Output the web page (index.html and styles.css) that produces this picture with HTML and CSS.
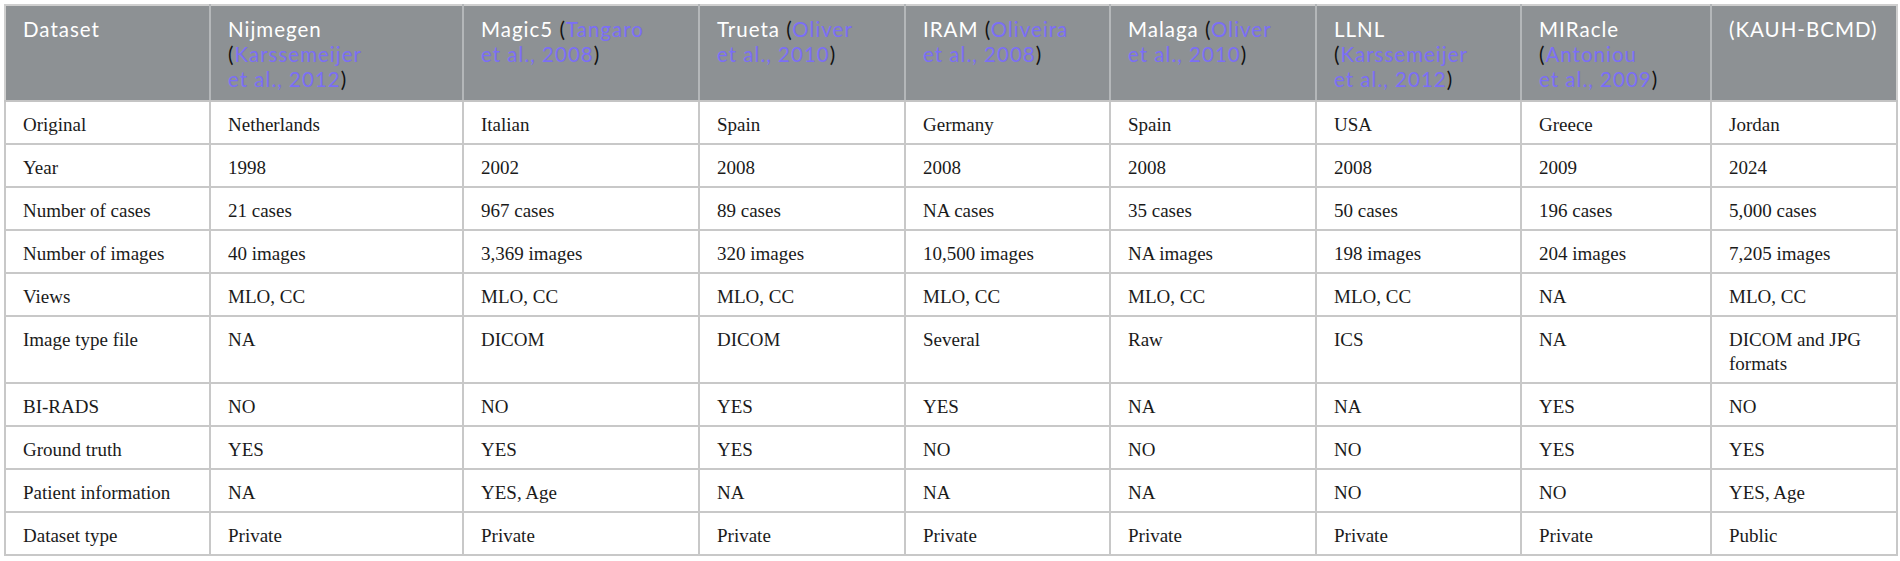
FILE: index.html
```html
<!DOCTYPE html>
<html lang="en">
<head>
<meta charset="utf-8">
<title>Dataset comparison</title>
<link rel="stylesheet" href="styles.css">
</head>
<body>
<div class="wrap">
<table class="data">
  <colgroup>
    <col class="c1"><col class="c2"><col class="c3"><col class="c4"><col class="c5"><col class="c6"><col class="c7"><col class="c8"><col class="c9">
  </colgroup>
  <thead>
    <tr>
      <th><span class="ln">Dataset</span></th>
      <th><span class="ln">Nijmegen</span><span class="ln"><span class="p">(</span><a class="ref">Karssemeijer</a></span><span class="ln"><a class="ref">et al., 2012</a><span class="p">)</span></span></th>
      <th><span class="ln">Magic5 <span class="p">(</span><a class="ref">Tangaro</a></span><span class="ln"><a class="ref">et al., 2008</a><span class="p">)</span></span></th>
      <th><span class="ln">Trueta <span class="p">(</span><a class="ref">Oliver</a></span><span class="ln"><a class="ref">et al., 2010</a><span class="p">)</span></span></th>
      <th><span class="ln">IRAM <span class="p">(</span><a class="ref">Oliveira</a></span><span class="ln"><a class="ref">et al., 2008</a><span class="p">)</span></span></th>
      <th><span class="ln">Malaga <span class="p">(</span><a class="ref">Oliver</a></span><span class="ln"><a class="ref">et al., 2010</a><span class="p">)</span></span></th>
      <th><span class="ln">LLNL</span><span class="ln"><span class="p">(</span><a class="ref">Karssemeijer</a></span><span class="ln"><a class="ref">et al., 2012</a><span class="p">)</span></span></th>
      <th><span class="ln">MIRacle</span><span class="ln"><span class="p">(</span><a class="ref">Antoniou</a></span><span class="ln"><a class="ref">et al., 2009</a><span class="p">)</span></span></th>
      <th><span class="ln">(KAUH-BCMD)</span></th>
    </tr>
  </thead>
  <tbody>
    <tr><td>Original</td><td>Netherlands</td><td>Italian</td><td>Spain</td><td>Germany</td><td>Spain</td><td>USA</td><td>Greece</td><td>Jordan</td></tr>
    <tr><td>Year</td><td>1998</td><td>2002</td><td>2008</td><td>2008</td><td>2008</td><td>2008</td><td>2009</td><td>2024</td></tr>
    <tr><td>Number of cases</td><td>21 cases</td><td>967 cases</td><td>89 cases</td><td>NA cases</td><td>35 cases</td><td>50 cases</td><td>196 cases</td><td>5,000 cases</td></tr>
    <tr><td>Number of images</td><td>40 images</td><td>3,369 images</td><td>320 images</td><td>10,500 images</td><td>NA images</td><td>198 images</td><td>204 images</td><td>7,205 images</td></tr>
    <tr><td>Views</td><td>MLO, CC</td><td>MLO, CC</td><td>MLO, CC</td><td>MLO, CC</td><td>MLO, CC</td><td>MLO, CC</td><td>NA</td><td>MLO, CC</td></tr>
    <tr><td>Image type file</td><td>NA</td><td>DICOM</td><td>DICOM</td><td>Several</td><td>Raw</td><td>ICS</td><td>NA</td><td>DICOM and JPG formats</td></tr>
    <tr><td>BI-RADS</td><td>NO</td><td>NO</td><td>YES</td><td>YES</td><td>NA</td><td>NA</td><td>YES</td><td>NO</td></tr>
    <tr><td>Ground truth</td><td>YES</td><td>YES</td><td>YES</td><td>NO</td><td>NO</td><td>NO</td><td>YES</td><td>YES</td></tr>
    <tr><td>Patient information</td><td>NA</td><td>YES, Age</td><td>NA</td><td>NA</td><td>NA</td><td>NO</td><td>NO</td><td>YES, Age</td></tr>
    <tr><td>Dataset type</td><td>Private</td><td>Private</td><td>Private</td><td>Private</td><td>Private</td><td>Private</td><td>Private</td><td>Public</td></tr>
  </tbody>
</table>
</div>
</body>
</html>
```

FILE: styles.css
```css
html, body {
  margin: 0;
  padding: 0;
  background: #ffffff;
}

.wrap {
  padding: 4px;
}

.data {
  width: 1892px;
  border-collapse: collapse;
  table-layout: fixed;
  border: 2px solid #cfcfcf;
}

.c1 { width: 205px; }
.c2 { width: 253px; }
.c3 { width: 236px; }
.c4 { width: 206px; }
.c5 { width: 205px; }
.c6 { width: 206px; }
.c7 { width: 205px; }
.c8 { width: 190px; }
.c9 { width: 186px; }

.data th {
  background: #8d9194;
  color: #ffffff;
  font-family: Lato, "Open Sans", sans-serif;
  font-weight: 400;
  font-size: 20.5px;
  line-height: 25px;
  letter-spacing: 1px;
  text-align: left;
  vertical-align: top;
  padding: 11px 6px 8px 17px;
  border: 2px solid #b4b7b9;
  border-top-color: #cfcfcf;
  border-bottom-color: #c4c4c4;
}

.data th:first-child { border-left-color: #cfcfcf; }
.data th:last-child { border-right-color: #cfcfcf; }

.ln {
  display: block;
  height: 25px;
  white-space: nowrap;
}

.p {
  color: #111111;
}

.ref {
  color: #7b6ef6;
  text-decoration: none;
}

.data td {
  font-family: "Liberation Serif", "Times New Roman", serif;
  font-size: 19px;
  line-height: 24px;
  color: #1a1a1a;
  vertical-align: top;
  padding: 11px 12px 6px 17px;
  border: 2px solid #c8c8c8;
}
```
